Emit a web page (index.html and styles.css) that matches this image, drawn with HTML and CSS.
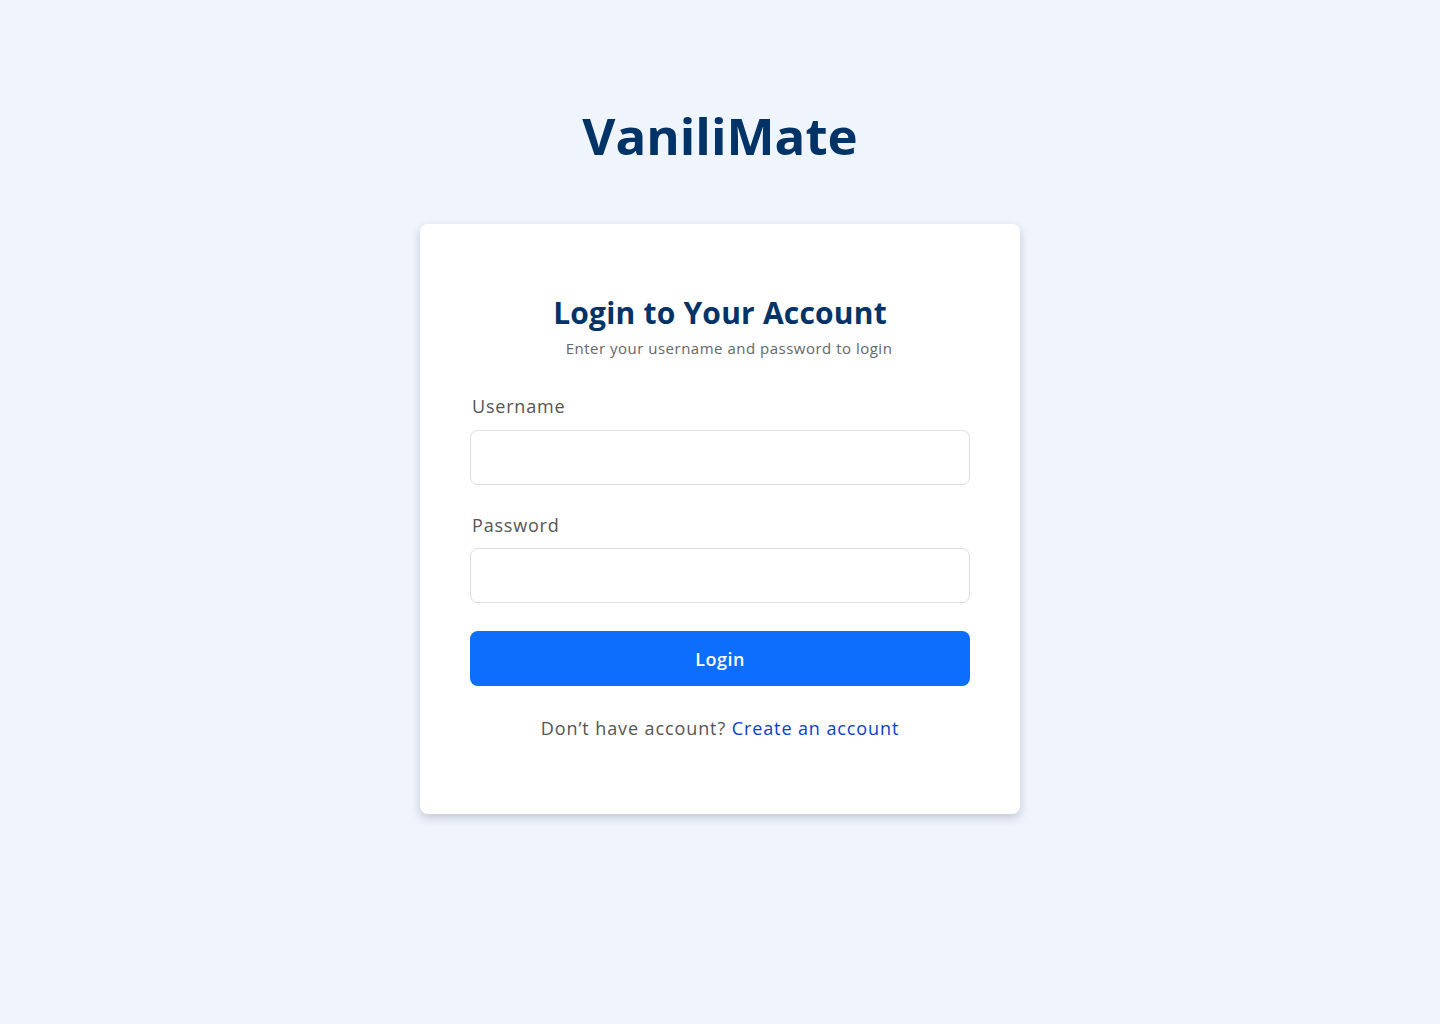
FILE: index.html
```html
<!DOCTYPE html>
<html lang="en">
<head>
<meta charset="utf-8">
<title>VaniliMate - Login</title>
<link rel="stylesheet" href="styles.css">
</head>
<body>
<main class="page">
  <h1 class="brand">VaniliMate</h1>
  <section class="card">
    <h2 class="card-title">Login to Your Account</h2>
    <p class="card-sub">Enter your username and password to login</p>
    <form class="form">
      <label class="label" for="username">Username</label>
      <input class="input" id="username" type="text">
      <label class="label label-gap" for="password">Password</label>
      <input class="input" id="password" type="password">
      <button class="btn" type="button">Login</button>
    </form>
    <p class="footer">Don’t have account? <a class="link" href="#">Create an account</a></p>
  </section>
</main>
</body>
</html>
```

FILE: styles.css
```css
* { box-sizing: border-box; }
html, body { margin: 0; padding: 0; }
body {
  background: #eff4fd;
  font-family: "Open Sans", "Liberation Sans", sans-serif;
  color: #555;
}
.page {
  display: flex;
  flex-direction: column;
  align-items: center;
  min-height: 1024px;
}
.brand {
  margin: 105px 0 59px;
  font-size: 51px;
  line-height: 60px;
  font-weight: 700;
  color: #013366;
  letter-spacing: 0;
}
.card {
  width: 600px;
  background: #fff;
  border-radius: 8px;
  box-shadow: 0 4px 10px rgba(40, 50, 80, 0.22);
  padding: 69px 50px 73px;
  display: flex;
  flex-direction: column;
}
.card-title {
  margin: 0;
  text-align: center;
  font-size: 30px;
  line-height: 40px;
  font-weight: 700;
  color: #013366;
  letter-spacing: 0.2px;
}
.card-sub {
  margin: 4px 0 0 18px;
  text-align: center;
  font-size: 15px;
  line-height: 22px;
  color: #666;
  letter-spacing: 0.5px;
}
.form {
  display: flex;
  flex-direction: column;
  margin-top: 34px;
}
.label {
  padding-left: 2px;
  font-size: 18px;
  line-height: 26px;
  color: #555;
  margin-bottom: 11px;
  letter-spacing: 0.8px;
}
.label-gap { margin-top: 27px; margin-bottom: 10px; }
.input {
  height: 55px;
  width: 100%;
  border: 1px solid #dedede;
  border-radius: 8px;
  background: #fff;
  font: inherit;
  padding: 0 14px;
}
.btn {
  margin-top: 28px;
  height: 55px;
  border: 0;
  border-radius: 8px;
  background: #0d6efd;
  color: #fff;
  font-family: inherit;
  font-size: 18px;
  font-weight: 600;
  letter-spacing: 0.5px;
}
.footer {
  margin: 29px 0 0;
  text-align: center;
  font-size: 18px;
  line-height: 26px;
  color: #555;
  letter-spacing: 0.9px;
}
.link {
  color: #0a3ed0;
  text-decoration: none;
}
```
